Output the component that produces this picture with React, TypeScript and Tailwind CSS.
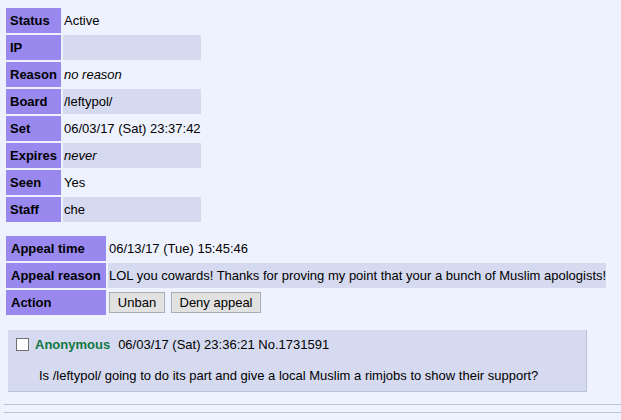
const font = { fontFamily: '"Liberation Sans", Arial, sans-serif' };

const banRows: { label: string; value: string; italic?: boolean }[] = [
  { label: 'Status', value: 'Active' },
  { label: 'IP', value: '' },
  { label: 'Reason', value: 'no reason', italic: true },
  { label: 'Board', value: '/leftypol/' },
  { label: 'Set', value: '06/03/17 (Sat) 23:37:42' },
  { label: 'Expires', value: 'never', italic: true },
  { label: 'Seen', value: 'Yes' },
  { label: 'Staff', value: 'che' },
];

export default function App() {
  return (
    <div
      className="w-[621px] h-[420px] overflow-hidden bg-[#eef2ff] text-[13px] text-black pt-[6px]"
      style={font}
    >
      <table className="ml-[4px] border-separate border-spacing-[2px] table-fixed">
        <tbody>
          {banRows.map((row, i) => (
            <tr key={row.label} className="h-[25px]">
              <th className="bg-[#9988ee] text-left font-bold pl-[4px] pr-0 w-[55px] whitespace-nowrap overflow-hidden">{row.label}</th>
              <td
                className={`w-[135px] pl-[1px] whitespace-nowrap ${i % 2 === 1 ? 'bg-[#d6daf0]' : ''} ${row.italic ? 'italic' : ''}`}
              >
                {row.value}
              </td>
            </tr>
          ))}
        </tbody>
      </table>

      <table className="ml-[4px] mt-[10px] border-separate border-spacing-[2px]">
        <tbody>
          <tr className="h-[25px]">
            <th className="bg-[#9988ee] text-left font-bold pl-[5px] pr-[4px] w-[100px] whitespace-nowrap">Appeal time</th>
            <td className="pl-[1px] whitespace-nowrap">06/13/17 (Tue) 15:45:46</td>
          </tr>
          <tr className="h-[25px]">
            <th className="bg-[#9988ee] text-left font-bold pl-[5px] pr-[4px] whitespace-nowrap">Appeal reason</th>
            <td className="pl-[1px] bg-[#d6daf0] whitespace-nowrap">
              LOL you cowards! Thanks for proving my point that your a bunch of Muslim apologists!
            </td>
          </tr>
          <tr className="h-[25px]">
            <th className="bg-[#9988ee] text-left font-bold pl-[5px] pr-[4px]">Action</th>
            <td className="pl-[1px]">
              <div className="flex gap-[6px]">
                <button className="h-[21px] w-[56px] bg-[#e1e1e1] border border-[#adadad] text-[13px]">Unban</button>
                <button className="h-[21px] w-[90px] bg-[#e1e1e1] border border-[#adadad] text-[13px]">Deny appeal</button>
              </div>
            </td>
          </tr>
        </tbody>
      </table>

      <div className="ml-[8px] mt-[13px] w-[579px] h-[62px] bg-[#d6daf0] border-r border-b border-[#b7c5d9] pt-[7px]">
        <div className="flex items-center pl-[8px] h-[15px]">
          <span className="w-[13px] h-[13px] border border-[#707070] bg-white" />
          <span className="ml-[6px] font-bold text-[#117743]">Anonymous</span>
          <span className="ml-[8px]">06/03/17 (Sat) 23:36:21 No.1731591</span>
        </div>
        <p className="pl-[31px] mt-[14px]">
          Is /leftypol/ going to do its part and give a local Muslim a rimjobs to show their support?
        </p>
      </div>

      <div className="ml-[4px] mt-[12px] border-t border-[#b7c5d9]" />
      <div className="ml-[4px] mt-[7px] border-t border-[#b7c5d9]" />
    </div>
  );
}
